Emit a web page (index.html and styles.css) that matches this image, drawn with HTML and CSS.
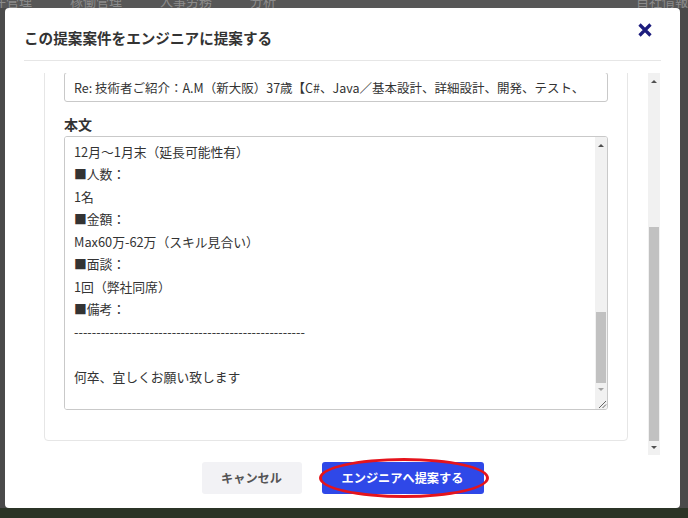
FILE: index.html
```html
<!DOCTYPE html>
<html lang="ja">
<head>
<meta charset="utf-8">
<title>エンジニアに提案</title>
<link rel="stylesheet" href="styles.css">
</head>
<body>
<div class="page">
  <nav class="topnav">
    <span class="nav-item first">件管理</span>
    <span class="nav-item">稼働管理</span>
    <span class="nav-item">人事労務</span>
    <span class="nav-item">分析</span>
    <span class="spacer"></span>
    <span class="nav-item">自社情報</span>
  </nav>
  <main class="backdrop"></main>
  <footer class="page-foot"></footer>
</div>

<div class="modal" role="dialog">
  <header class="modal-head">
    <h2 class="modal-title">この提案案件をエンジニアに提案する</h2>
    <button class="close" aria-label="閉じる">
      <svg width="14" height="14" viewBox="0 0 14 14"><path d="M1.5 1.5L12.5 12.5M12.5 1.5L1.5 12.5" stroke="#1d1d7e" stroke-width="3.2" fill="none"/></svg>
    </button>
  </header>

  <div class="modal-body">
    <div class="viewport" id="scroller">
      <div class="card">
        <div class="field">
          <label class="label">送信元</label>
          <input class="text" value="営業部 山田 太郎 &lt;yamada@example.co.jp&gt;">
        </div>
        <div class="field">
          <label class="label">宛先</label>
          <input class="text" value="tanaka@techpartners.example.jp">
        </div>
        <div class="field">
          <label class="label">CC</label>
          <input class="text" value="">
        </div>
        <div class="field">
          <label class="label">件名</label>
          <input class="text" value="Re: 技術者ご紹介：A.M（新大阪）37歳【C#、Java／基本設計、詳細設計、開発、テスト、">
        </div>
        <div class="field last">
          <label class="label">本文</label>
          <div class="area-box">
            <textarea class="area" id="mailbody">株式会社テックパートナーズ
田中様

いつも大変お世話になっております。
株式会社サンプルの山田でございます。

技術者のご紹介ありがとうございます。
下記案件にてご提案させていただきたく、
ご連絡いたしました。
ご検討のほど、よろしくお願いいたします。
----------------------------------------------------
■案件名：
物流システム刷新プロジェクト
■作業内容：
C#／Javaによる基本設計～テスト
既存システムのリプレイス対応
■必須スキル：
C#またはJavaでの開発経験3年以上
■尚可スキル：
物流業界での開発経験
■勤務地：
大阪市淀川区（新大阪駅徒歩5分）
■勤務時間：
9:00～18:00
■精算：
140h～180h
■期間：
12月～1月末（延長可能性有）
■人数：
1名
■金額：
Max60万-62万（スキル見合い）
■面談：
1回（弊社同席）
■備考：
----------------------------------------------------

何卒、宜しくお願い致します</textarea>
            <div class="vbar small">
              <span class="sb-btn up"></span>
              <span class="sb-track"><span class="sb-thumb" id="areaThumb"></span></span>
              <span class="sb-btn down dim"></span>
              <span class="grip">
                <svg width="12" height="12" viewBox="0 0 12 12"><path d="M4 11L11 4M7.5 11L11 7.5" stroke="#666" stroke-width="1" fill="none"/></svg>
              </span>
            </div>
          </div>
        </div>
      </div>
    </div>
    <div class="vbar">
      <span class="sb-btn up"></span>
      <span class="sb-track"><span class="sb-thumb" id="bodyThumb"></span></span>
      <span class="sb-btn down"></span>
    </div>
  </div>

  <div class="modal-foot">
    <button class="btn cancel">キャンセル</button>
    <button class="btn primary">エンジニアへ提案する</button>
  </div>
</div>
<script src="script.js"></script>
</body>
</html>
```

FILE: styles.css
```css
html, body {
  margin: 0;
  height: 100%;
  overflow: hidden;
}
body {
  font-family: "Noto Sans CJK JP", "Noto Sans", sans-serif;
  background: #4a4a4a;
  color: #333;
}

/* background page */
.page {
  display: flex;
  flex-direction: column;
  height: 518px;
}
.topnav {
  flex: none;
  height: 8px;
  overflow: hidden;
  display: flex;
  align-items: flex-end;
  gap: 38px;
  background: #575757;
  color: #8c8c8c;
  font-size: 13px;
  line-height: 14px;
  white-space: nowrap;
}
.topnav .first { margin-left: -7px; }
.spacer { flex: 1; }
.backdrop { flex: 1; background: #4a4a4a; }
.page-foot { flex: none; height: 10px; background: #2b3426; }

/* modal */
.modal {
  position: fixed;
  left: 5px;
  top: 8px;
  width: 675px;
  height: 500px;
  background: #fff;
  border-radius: 4px;
  display: flex;
  flex-direction: column;
}
.modal-head {
  flex: none;
  box-sizing: border-box;
  height: 53px;
  margin: 0 19px;
  border-bottom: 1px solid #e6e6e6;
  display: flex;
  align-items: flex-start;
  justify-content: space-between;
}
.modal-title {
  margin: 19px 0 0;
  font-size: 14.6px;
  line-height: 22px;
  font-weight: 700;
  color: #333;
}
.close {
  border: none;
  background: none;
  padding: 0;
  margin: 15px 9px 0 0;
  width: 14px;
  height: 14px;
  display: block;
}
.close svg { display: block; }

.modal-body {
  flex: none;
  height: 382px;
  margin: 12px 20px 0 19px;
  display: flex;
}
.viewport {
  flex: 1;
  min-width: 0;
  box-sizing: border-box;
  padding: 14px 20px;
  overflow: hidden;
}
.card {
  border: 1px solid #e6e6e6;
  border-radius: 4px;
  padding: 20px 19px 30px;
}
.field { margin-bottom: 12px; }
.field.last { margin-bottom: 0; }
.label {
  display: block;
  font-size: 14px;
  line-height: 20px;
  font-weight: 700;
  margin-bottom: 2px;
  color: #333;
}
.text {
  display: block;
  width: 100%;
  box-sizing: border-box;
  height: 30px;
  padding: 0 9px;
  border: 1px solid #c9c9c9;
  border-radius: 3px;
  font-family: inherit;
  font-size: 12.5px;
  color: #333;
  background: #fff;
}
.area-box {
  display: flex;
  box-sizing: border-box;
  height: 274px;
  border: 1px solid #c9c9c9;
  border-radius: 3px;
  overflow: hidden;
}
.area {
  flex: 1;
  min-width: 0;
  display: block;
  box-sizing: border-box;
  height: 100%;
  margin: 0;
  padding: 8px 9px 21px;
  border: none;
  outline: none;
  resize: none;
  overflow: hidden;
  font-family: inherit;
  font-size: 12.8px;
  line-height: 22.5px;
  color: #333;
  background: #fff;
}

/* scrollbars */
.vbar {
  flex: none;
  width: 12px;
  display: flex;
  flex-direction: column;
  background: #f1f1f1;
}
.sb-btn {
  flex: none;
  height: 14px;
  display: flex;
  align-items: center;
  justify-content: center;
}
.sb-btn::before {
  content: "";
  width: 0;
  height: 0;
  border-left: 3px solid transparent;
  border-right: 3px solid transparent;
}
.sb-btn.up::before { border-bottom: 3px solid #505050; margin-top: 3px; }
.sb-btn.down::before { border-top: 3px solid #505050; margin-bottom: 1px; }
.sb-btn.down.dim::before { border-top-color: #a3a3a3; }
.sb-track {
  flex: 1;
  display: block;
  overflow: hidden;
}
.sb-thumb {
  display: block;
  margin: 0 1px;
  background: #c1c1c1;
  height: 0;
}
.grip {
  flex: none;
  height: 12px;
  display: block;
}
.grip svg { display: block; }

/* footer */
.modal-foot {
  flex: none;
  display: flex;
  justify-content: center;
  gap: 20px;
  padding: 7px 0 14px;
}
.btn {
  height: 32px;
  border: none;
  border-radius: 3px;
  font-family: inherit;
  font-size: 12.2px;
  font-weight: 700;
  padding: 0;
}
.cancel {
  width: 100px;
  background: #f2f2f5;
  color: #555;
}
.primary {
  width: 162px;
  background: #2f48e8;
  color: #fff;
  position: relative;
}
.primary::after {
  content: "";
  position: absolute;
  top: -4px;
  bottom: -4px;
  left: -3px;
  right: -5px;
  border: 3px solid #e5141c;
  border-radius: 50%;
  pointer-events: none;
}
```

FILE: script.js
```js
function syncBar(scroller, thumb) {
  var track = thumb.parentElement;
  var th = track.clientHeight;
  var sh = scroller.scrollHeight;
  thumb.style.height = (th * scroller.clientHeight / sh) + 'px';
  thumb.style.marginTop = (th * scroller.scrollTop / sh) + 'px';
}
function scrollToEnd() {
  var s = document.getElementById('scroller');
  s.scrollTop = s.scrollHeight;
  var t = document.getElementById('mailbody');
  t.scrollTop = t.scrollHeight;
  syncBar(s, document.getElementById('bodyThumb'));
  syncBar(t, document.getElementById('areaThumb'));
}
scrollToEnd();
window.addEventListener('load', scrollToEnd);
```
